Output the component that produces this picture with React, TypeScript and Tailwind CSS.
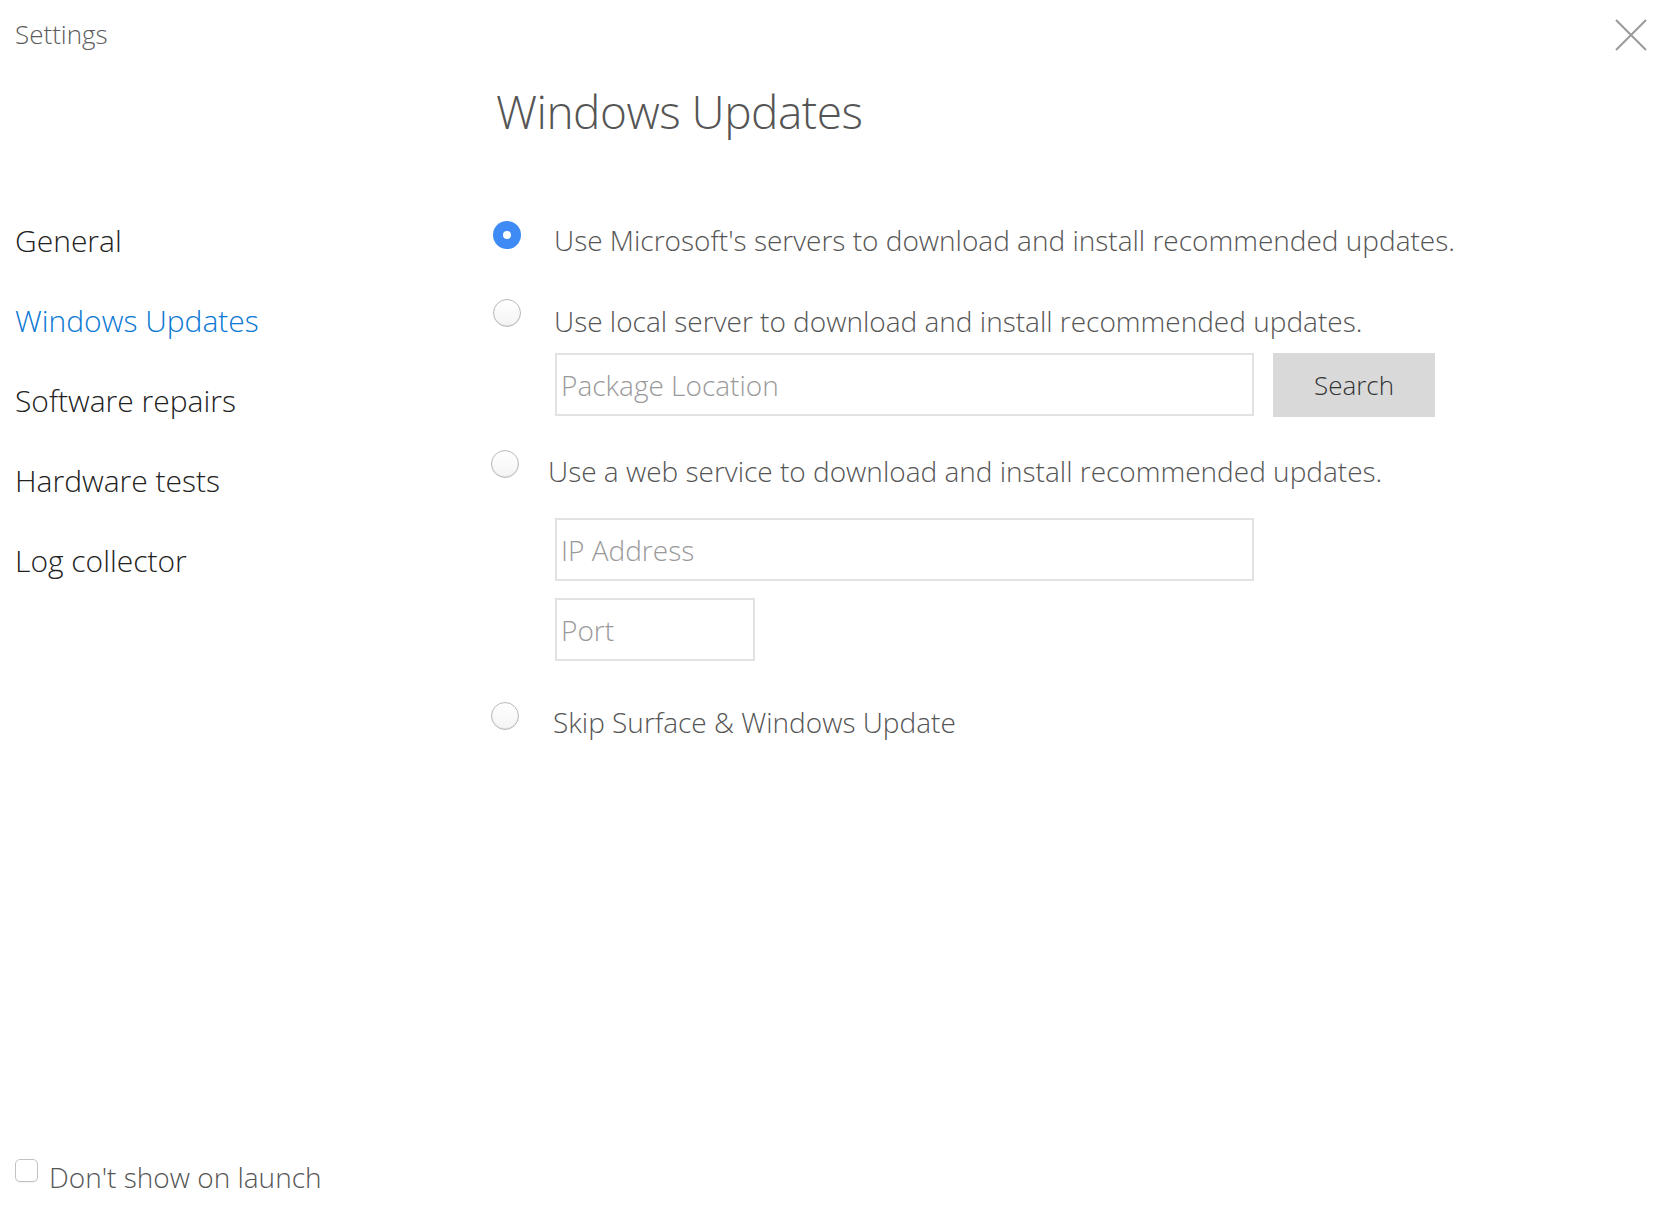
import React, { useState } from 'react';

const navItems = ['General', 'Windows Updates', 'Software repairs', 'Hardware tests', 'Log collector'];

function Radio({ checked, className }: { checked?: boolean; className?: string }) {
  if (checked) {
    return (
      <span className={`flex h-[28px] w-[28px] shrink-0 items-center justify-center rounded-full bg-[#3f8bf6] ${className ?? ''}`}>
        <span className="h-[8px] w-[8px] rounded-full bg-white" />
      </span>
    );
  }
  return (
    <span
      className={`h-[28px] w-[28px] shrink-0 rounded-full border border-[#b9b9b9] bg-gradient-to-b from-white to-[#f4f4f4] shadow-[inset_0_-1px_1px_rgba(0,0,0,0.08)] ${className ?? ''}`}
    />
  );
}

function Field({ placeholder, width }: { placeholder: string; width: string }) {
  return (
    <div className={`flex h-[63px] ${width} items-center border-2 border-[#e2e2e2] pl-[4px] text-[28px] font-light text-[#9a9a9a]`}>
      {placeholder}
    </div>
  );
}

export default function App() {
  const [active] = useState(1);

  return (
    <div className="flex h-[1231px] w-full bg-white font-['Open_Sans',sans-serif] text-[#555]">
      <aside className="flex w-[491px] shrink-0 flex-col pl-[15px]">
        <div className="mt-[20px] text-[26px] font-light leading-[28px] text-[#5c5c5c]">Settings</div>
        <nav className="mt-[153px] flex flex-col">
          {navItems.map((item, i) => (
            <div
              key={item}
              className={`h-[80px] text-[30px] font-light leading-[80px] ${i === active ? 'text-[#0a78d4]' : 'text-[#222]'}`}
            >
              {item}
            </div>
          ))}
        </nav>
        <label className="mt-auto mb-[39px] flex items-start">
          <span className="mt-[-3px] h-[23px] w-[23px] rounded-[5px] border border-[#c2c2c2] bg-white shadow-[0_1px_1px_rgba(0,0,0,0.06)]" />
          <span className="ml-[11px] text-[28px] font-light leading-[30px] text-[#555]">Don't show on launch</span>
        </label>
      </aside>

      <main className="flex flex-1 flex-col text-[28px] font-light text-[#555]">
        <h1 className="ml-[5px] mt-[85px] text-[46px] font-light leading-[52px] tracking-[-0.5px] text-[#555]">Windows Updates</h1>

        <div className="mt-[73px] flex h-[60px] items-center">
          <Radio checked className="mb-[10px] ml-[2px]" />
          <span className="ml-[33px]">Use Microsoft's servers to download and install recommended updates.</span>
        </div>

        <div className="mt-[21px] flex h-[60px] items-center">
          <Radio className="mb-[16px] ml-[2px]" />
          <span className="ml-[33px]">Use local server to download and install recommended updates.</span>
        </div>

        <div className="ml-[64px] mt-[2px] flex gap-[19px]">
          <Field placeholder="Package Location" width="w-[699px]" />
          <button className="h-[64px] w-[162px] bg-[#d9d9d9] text-[26px] font-light text-[#333]">Search</button>
        </div>

        <div className="mt-[24px] flex h-[60px] items-center">
          <Radio className="mb-[14px]" />
          <span className="ml-[29px]">Use a web service to download and install recommended updates.</span>
        </div>

        <div className="ml-[64px] mt-[17px]">
          <Field placeholder="IP Address" width="w-[699px]" />
        </div>
        <div className="ml-[64px] mt-[17px]">
          <Field placeholder="Port" width="w-[200px]" />
        </div>

        <div className="mt-[31px] flex h-[60px] items-center">
          <Radio className="mb-[12px]" />
          <span className="ml-[34px]">Skip Surface &amp; Windows Update</span>
        </div>
      </main>

      <div className="w-[55px] shrink-0 pt-[19px]">
        <svg width="32" height="32" viewBox="0 0 32 32" fill="none" stroke="#9a9a9a" strokeWidth="2">
          <path d="M1 1 L31 31 M31 1 L1 31" />
        </svg>
      </div>
    </div>
  );
}
